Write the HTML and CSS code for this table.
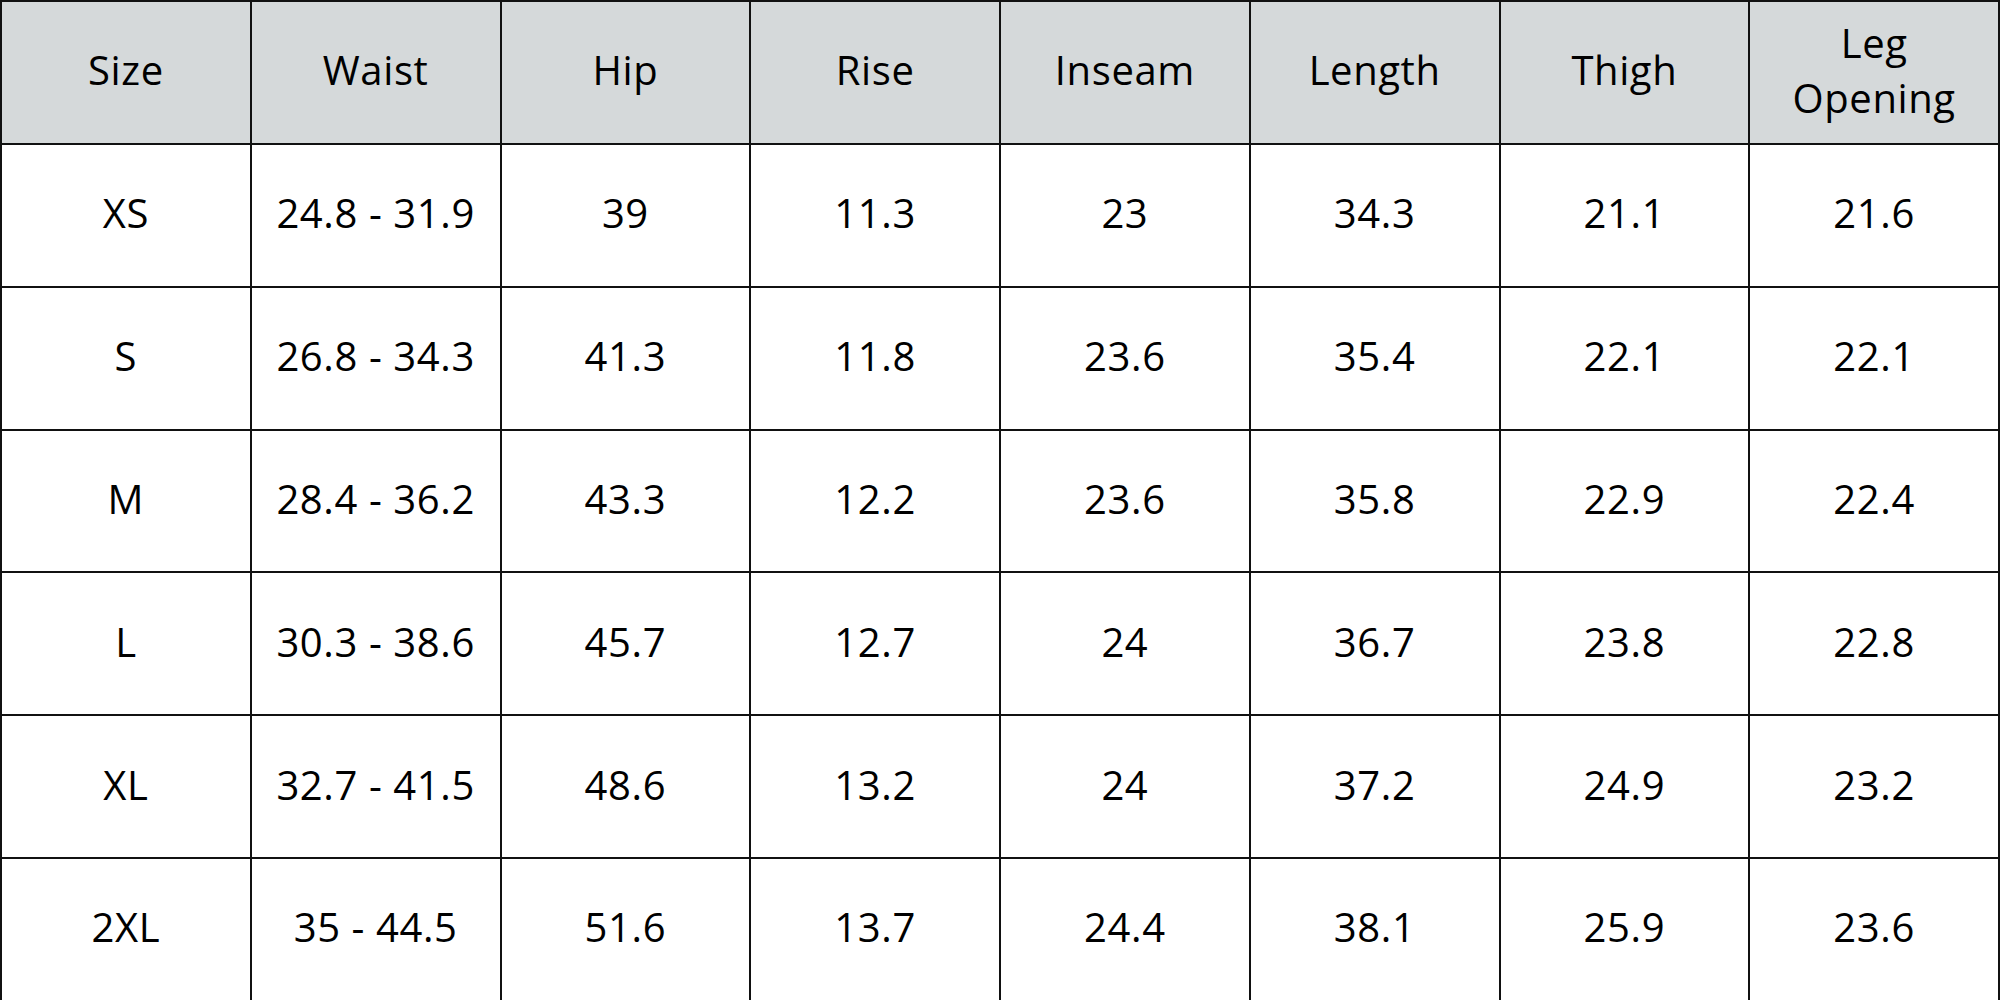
FILE: index.html
```html
<!DOCTYPE html>
<html>
<head>
<meta charset="utf-8">
<link rel="stylesheet" href="styles.css">
</head>
<body>
<table class="sizes">
<thead>
<tr><th>Size</th><th>Waist</th><th>Hip</th><th>Rise</th><th>Inseam</th><th>Length</th><th>Thigh</th><th class="narrow">Leg Opening</th></tr>
</thead>
<tbody>
<tr><td>XS</td><td>24.8 - 31.9</td><td>39</td><td>11.3</td><td>23</td><td>34.3</td><td>21.1</td><td>21.6</td></tr>
<tr><td>S</td><td>26.8 - 34.3</td><td>41.3</td><td>11.8</td><td>23.6</td><td>35.4</td><td>22.1</td><td>22.1</td></tr>
<tr><td>M</td><td>28.4 - 36.2</td><td>43.3</td><td>12.2</td><td>23.6</td><td>35.8</td><td>22.9</td><td>22.4</td></tr>
<tr><td>L</td><td>30.3 - 38.6</td><td>45.7</td><td>12.7</td><td>24</td><td>36.7</td><td>23.8</td><td>22.8</td></tr>
<tr><td>XL</td><td>32.7 - 41.5</td><td>48.6</td><td>13.2</td><td>24</td><td>37.2</td><td>24.9</td><td>23.2</td></tr>
<tr><td>2XL</td><td>35 - 44.5</td><td>51.6</td><td>13.7</td><td>24.4</td><td>38.1</td><td>25.9</td><td>23.6</td></tr>
</tbody>
</table>
</body>
</html>
```
FILE: styles.css
```css
html, body {
  margin: 0;
  padding: 0;
  background: #ffffff;
}
.sizes {
  width: 2000px;
  height: 1000px;
  border-collapse: collapse;
  table-layout: fixed;
  font-family: "Open Sans", "Noto Sans", sans-serif;
  font-size: 40px;
  letter-spacing: 0.6px;
  color: #000;
}
.sizes tr {
  height: 142.857px;
}
.sizes th, .sizes td {
  border: 2px solid #111;
  text-align: center;
  vertical-align: middle;
  padding: 0 0 5px 0;
  font-weight: 400;
}
.sizes th {
  background: #d5d9da;
  line-height: 1.38;
}
.sizes th.narrow {
  padding: 0 40px 5px 40px;
}
```
